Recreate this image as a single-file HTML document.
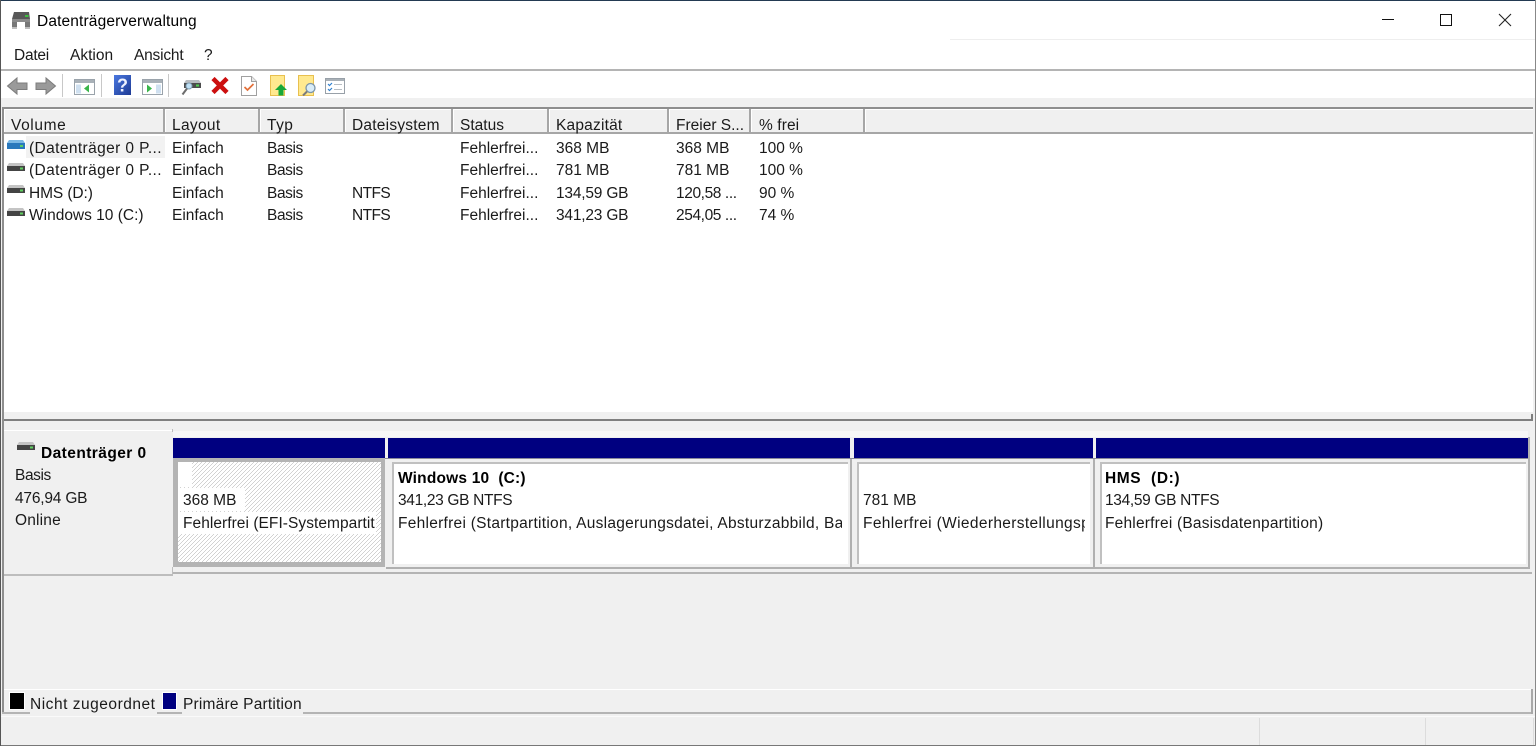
<!DOCTYPE html>
<html lang="de"><head><meta charset="utf-8"><title>Datenträgerverwaltung</title>
<style>
html,body{margin:0;padding:0;width:1536px;height:746px;overflow:hidden;background:#f0f0f0}
body{position:relative;font-family:"Liberation Sans",sans-serif;font-size:15.5px;color:#1a1a1a}
.a{position:absolute}
.t{position:absolute;white-space:pre;line-height:18px;height:20px}
.b{font-weight:bold;color:#000}
.v{position:absolute;top:74px;width:1px;height:23px;background:#c8c8c8}
.h{position:absolute;top:109px;height:23px;background:#f0f0f0;border-right:2px solid #a6a6a6;box-shadow:inset 1px 1px 0 #fff}
.bar{position:absolute;top:438px;height:20px;background:#000080}
.p{position:absolute;top:459px;height:110px;background:#f0f0f0;box-sizing:border-box;border-right:2px solid #b0b0b0;border-bottom:2px solid #b0b0b0}
.pi{position:absolute;top:462px;height:102px;box-sizing:border-box;background:#fff;border-top:2px solid #c0c0c0;border-left:2px solid #c0c0c0}
</style></head><body>
<!-- window -->
<div class="a" style="left:0;top:0;width:1536px;height:69px;background:#fff"></div>
<div class="a" style="left:0;top:0;width:1536px;height:1px;background:#233a52"></div>
<div class="a" style="left:950px;top:39px;width:586px;height:1px;background:#eeeeee"></div>
<div class="a" style="left:0;top:69px;width:1536px;height:2px;background:#b4b4b4"></div>
<div class="a" style="left:0;top:71px;width:1536px;height:27px;background:#fff"></div>

<!-- title -->
<svg class="a" style="left:11px;top:12px" width="20" height="17" viewBox="0 0 20 17">
<path d="M3 0h15l1 7H1z" fill="#585858"/><path d="M1 7h18v3H1z" fill="#8a8a8a"/><path d="M1 10h5v7H1zM14 10h5v7h-5z" fill="#777"/><path d="M6 10h8v6H6z" fill="#fff"/><path d="M14 3h3.500v2H14z" fill="#3fc03f"/><path d="M1 15h5v2H1zM14 15h5v2h-5z" fill="#bdbdbd"/>
</svg>
<div class="t" style="left:37px;top:13px;color:#000;letter-spacing:.14px">Datenträgerverwaltung</div>

<!-- window controls -->
<div class="a" style="left:1382px;top:19px;width:12px;height:1px;background:#111"></div>
<div class="a" style="left:1440px;top:14px;width:12px;height:12px;box-sizing:border-box;border:1px solid #111"></div>
<svg class="a" style="left:1498px;top:13px" width="14" height="14" viewBox="0 0 14 14"><path d="M1 1l12 12M13 1L1 13" stroke="#222" stroke-width="1.1" fill="none"/></svg>

<!-- menu -->
<div class="t" style="left:14px;top:47px;letter-spacing:-.25px">Datei</div>
<div class="t" style="left:70px;top:47px">Aktion</div>
<div class="t" style="left:134px;top:47px;letter-spacing:-.2px">Ansicht</div>
<div class="t" style="left:204px;top:47px">?</div>

<!-- toolbar -->
<svg class="a" style="left:6px;top:76px" width="51" height="20" viewBox="0 0 51 20">
<path d="M1.500 10L11 2v5h10v6.500H11v4.500z" fill="#9a9a9a" stroke="#7c7c7c"/>
<path d="M49.500 10L40 2v5H30v6.500h10v4.500z" fill="#9a9a9a" stroke="#7c7c7c"/>
</svg>
<div class="v" style="left:62px"></div>
<svg class="a" style="left:74px;top:79px" width="21" height="16" viewBox="0 0 21 16">
<rect x=".5" y=".5" width="20" height="15" fill="#fff" stroke="#9aa3ab"/><rect x="1" y="1" width="19" height="3" fill="#a9b1b8"/><rect x="2" y="5.500" width="5" height="9" fill="#cfe0f0"/><path d="M15 5.500v8l-5-4z" fill="#39b54a"/>
</svg>
<div class="v" style="left:101px"></div>
<svg class="a" style="left:114px;top:75px" width="18" height="20" viewBox="0 0 18 20">
<defs><linearGradient id="g" x1="0" y1="0" x2="1" y2="1"><stop offset="0" stop-color="#4a78e0"/><stop offset="1" stop-color="#1d3a94"/></linearGradient></defs>
<rect width="17" height="20" fill="url(#g)"/>
<text x="8.500" y="16.500" font-family="Liberation Sans" font-weight="bold" font-size="18" fill="#eef2ff" text-anchor="middle">?</text>
</svg>
<svg class="a" style="left:142px;top:79px" width="21" height="16" viewBox="0 0 21 16">
<rect x=".5" y=".5" width="20" height="15" fill="#fff" stroke="#9aa3ab"/><rect x="1" y="1" width="19" height="3" fill="#a9b1b8"/><rect x="14" y="5.500" width="5" height="9" fill="#cfe0f0"/><path d="M5 5.500v8l5-4z" fill="#39b54a"/>
</svg>
<div class="v" style="left:168px"></div>
<svg class="a" style="left:181px;top:79px" width="20" height="17" viewBox="0 0 20 17">
<path d="M5 1h13l2 3H3z" fill="#b8bcc0"/><rect x="3" y="4" width="17" height="5" fill="#4c4c4c"/><rect x="15" y="5.500" width="3" height="2" fill="#4fd04f"/><circle cx="8" cy="7" r="3" fill="#bfe0f5" stroke="#7f9fb5"/><path d="M6 9.500L1.500 15.500" stroke="#6d6d6d" stroke-width="2"/>
</svg>
<svg class="a" style="left:211px;top:77px" width="18" height="17" viewBox="0 0 18 17"><path d="M2 1.500l14 14M16 1.500l-14 14" stroke="#cc0f0f" stroke-width="4.500"/></svg>
<svg class="a" style="left:241px;top:76px" width="16" height="20" viewBox="0 0 16 20">
<path d="M.5.500h10l5 5v14H.500z" fill="#fff" stroke="#a0a0a0"/><path d="M10.500.500v5h5" fill="#e8e8e8" stroke="#a0a0a0"/><path d="M3.500 11l3 3 6-6" fill="none" stroke="#e2703a" stroke-width="1.700"/>
</svg>
<svg class="a" style="left:270px;top:75px" width="18" height="21" viewBox="0 0 18 21">
<path d="M.5.500h14v20H.500z" fill="#ffe98f" stroke="#e8c04f"/><path d="M11 9l6 6h-3.500v5.500h-5V15H5z" fill="#18a838"/>
</svg>
<svg class="a" style="left:298px;top:75px" width="19" height="21" viewBox="0 0 19 21">
<path d="M.5.500h15v20H.500z" fill="#ffe98f" stroke="#e8c04f"/><circle cx="12.500" cy="13" r="4.500" fill="#d8ecf8" stroke="#7b94a8" stroke-width="1.300"/><path d="M9 16.500l-4 4" stroke="#7b7b7b" stroke-width="2"/>
</svg>
<svg class="a" style="left:325px;top:78px" width="20" height="16" viewBox="0 0 20 16">
<rect x=".5" y=".5" width="19" height="15" fill="#fff" stroke="#98a0a8"/><rect x="1" y="1" width="18" height="2" fill="#a9b1b8"/><path d="M3 6l1.500 1.500L7 5M3 11l1.500 1.500L7 10" stroke="#2f80d0" fill="none" stroke-width="1.200"/><path d="M9 6.500h8M9 11.500h8" stroke="#b8bec4"/>
</svg>

<!-- list pane -->
<div class="a" style="left:2px;top:107px;width:1531px;height:2px;background:#8e8e8e"></div>
<div class="a" style="left:4px;top:109px;width:1529px;height:303px;background:#fff"></div>

<div class="h" style="left:4px;width:159px"></div>
<div class="h" style="left:165px;width:93px"></div>
<div class="h" style="left:260px;width:83px"></div>
<div class="h" style="left:345px;width:106px"></div>
<div class="h" style="left:453px;width:94px"></div>
<div class="h" style="left:549px;width:118px"></div>
<div class="h" style="left:669px;width:80px"></div>
<div class="h" style="left:751px;width:112px"></div>
<div class="h" style="left:865px;width:668px;border-right:0"></div>
<div class="a" style="left:4px;top:132px;width:1529px;height:2px;background:#a6a6a6"></div>

<div class="t" style="left:11px;top:117px;letter-spacing:.6px">Volume</div>
<div class="t" style="left:172px;top:117px;letter-spacing:.33px">Layout</div>
<div class="t" style="left:267px;top:117px;letter-spacing:.45px">Typ</div>
<div class="t" style="left:352px;top:117px;letter-spacing:.23px">Dateisystem</div>
<div class="t" style="left:460px;top:117px">Status</div>
<div class="t" style="left:556px;top:117px;letter-spacing:.2px">Kapazität</div>
<div class="t" style="left:676px;top:117px">Freier S...</div>
<div class="t" style="left:759px;top:117px;letter-spacing:.1px">% frei</div>

<div class="a" style="left:26px;top:136px;width:139px;height:22px;background:#f2f2f2"></div>

<!-- drive icons -->
<svg class="a" style="left:7px;top:139px" width="18" height="12" viewBox="0 0 18 12"><path d="M2 1h14l2 3H0z" fill="#7cb8e4"/><rect y="4" width="18" height="6" fill="#2a78bc"/><rect x="13" y="6" width="3" height="2" fill="#5fd05f"/></svg>
<svg class="a" style="left:7px;top:162px" width="18" height="12" viewBox="0 0 18 12"><path d="M2 1h14l2 3H0z" fill="#c4c4c4"/><rect y="4" width="18" height="5" fill="#444"/><rect x="13" y="5.500" width="3" height="2" fill="#5fd05f"/></svg>
<svg class="a" style="left:7px;top:184px" width="18" height="12" viewBox="0 0 18 12"><path d="M2 1h14l2 3H0z" fill="#c4c4c4"/><rect y="4" width="18" height="5" fill="#444"/><rect x="13" y="5.500" width="3" height="2" fill="#5fd05f"/></svg>
<svg class="a" style="left:7px;top:207px" width="18" height="12" viewBox="0 0 18 12"><path d="M2 1h14l2 3H0z" fill="#c4c4c4"/><rect y="4" width="18" height="5" fill="#444"/><rect x="13" y="5.500" width="3" height="2" fill="#5fd05f"/></svg>

<!-- rows -->
<div class="t" style="left:29px;top:140px;letter-spacing:.39px">(Datenträger 0 P...</div>
<div class="t" style="left:172px;top:140px">Einfach</div>
<div class="t" style="left:267px;top:140px;letter-spacing:-.4px">Basis</div>
<div class="t" style="left:460px;top:140px">Fehlerfrei...</div>
<div class="t" style="left:556px;top:140px">368 MB</div>
<div class="t" style="left:676px;top:140px">368 MB</div>
<div class="t" style="left:759px;top:140px">100 %</div>

<div class="t" style="left:29px;top:162px;letter-spacing:.39px">(Datenträger 0 P...</div>
<div class="t" style="left:172px;top:162px">Einfach</div>
<div class="t" style="left:267px;top:162px;letter-spacing:-.4px">Basis</div>
<div class="t" style="left:460px;top:162px">Fehlerfrei...</div>
<div class="t" style="left:556px;top:162px">781 MB</div>
<div class="t" style="left:676px;top:162px">781 MB</div>
<div class="t" style="left:759px;top:162px">100 %</div>

<div class="t" style="left:29px;top:185px;letter-spacing:-.1px">HMS (D:)</div>
<div class="t" style="left:172px;top:185px">Einfach</div>
<div class="t" style="left:267px;top:185px;letter-spacing:-.4px">Basis</div>
<div class="t" style="left:352px;top:185px;letter-spacing:-.6px">NTFS</div>
<div class="t" style="left:460px;top:185px">Fehlerfrei...</div>
<div class="t" style="left:556px;top:185px;letter-spacing:-.2px">134,59 GB</div>
<div class="t" style="left:676px;top:185px;letter-spacing:-.4px">120,58 ...</div>
<div class="t" style="left:759px;top:185px">90 %</div>

<div class="t" style="left:29px;top:207px">Windows 10 (C:)</div>
<div class="t" style="left:172px;top:207px">Einfach</div>
<div class="t" style="left:267px;top:207px;letter-spacing:-.4px">Basis</div>
<div class="t" style="left:352px;top:207px;letter-spacing:-.6px">NTFS</div>
<div class="t" style="left:460px;top:207px">Fehlerfrei...</div>
<div class="t" style="left:556px;top:207px;letter-spacing:-.2px">341,23 GB</div>
<div class="t" style="left:676px;top:207px;letter-spacing:-.4px">254,05 ...</div>
<div class="t" style="left:759px;top:207px">74 %</div>

<!-- splitter -->
<div class="a" style="left:4px;top:412px;width:1529px;height:7px;background:#f0f0f0"></div>
<div class="a" style="left:4px;top:419px;width:1529px;height:2px;background:#7f7f7f"></div>
<div class="a" style="left:1531px;top:414px;width:2px;height:7px;background:#7f7f7f"></div>
<div class="a" style="left:2px;top:107px;width:2px;height:607px;background:#8e8e8e"></div>

<!-- disk panel -->
<div class="a" style="left:4px;top:430px;width:169px;height:1px;background:#fff"></div>
<div class="a" style="left:173px;top:431px;width:1355px;height:6px;background:#f7f7f7"></div>
<div class="a" style="left:4px;top:574px;width:169px;height:2px;background:#bdbdbd"></div>
<div class="a" style="left:172px;top:567px;width:1px;height:8px;background:#bdbdbd"></div>
<div class="a" style="left:172px;top:429px;width:1px;height:3px;background:#bdbdbd"></div>
<svg class="a" style="left:17px;top:441px" width="18" height="12" viewBox="0 0 18 12"><path d="M2 1h14l2 3H0z" fill="#c4c4c4"/><rect y="4" width="18" height="5" fill="#444"/><rect x="13" y="5.500" width="3" height="2" fill="#5fd05f"/></svg>
<div class="t b" style="left:41px;top:445px;letter-spacing:.43px">Datenträger 0</div>
<div class="t" style="left:15px;top:467px;letter-spacing:-.4px">Basis</div>
<div class="t" style="left:15px;top:490px;letter-spacing:-.2px">476,94 GB</div>
<div class="t" style="left:15px;top:512px;letter-spacing:.18px">Online</div>

<!-- bars -->
<div class="bar" style="left:173px;width:212px"></div>
<div class="bar" style="left:388px;width:462px"></div>
<div class="bar" style="left:854px;width:239px"></div>
<div class="bar" style="left:1096px;width:432px"></div>
<div class="a" style="left:173px;top:458px;width:1355px;height:1px;background:#8a8a9a"></div>
<div class="a" style="left:1528px;top:437px;width:2px;height:22px;background:#b0b0b0"></div>

<!-- partitions -->
<div class="a" style="left:173px;top:458px;width:212px;height:109px;background:#b4b4b4"></div>
<svg class="a" style="left:178px;top:462px" width="203" height="100" shape-rendering="crispEdges">
<defs><pattern id="h" width="4" height="4" patternUnits="userSpaceOnUse"><rect width="4" height="4" fill="#fff"/><rect x="3" y="0" width="1" height="1" fill="#d2d2d2"/><rect x="2" y="1" width="1" height="1" fill="#d2d2d2"/><rect x="1" y="2" width="1" height="1" fill="#d2d2d2"/><rect x="0" y="3" width="1" height="1" fill="#d2d2d2"/></pattern></defs>
<rect width="203" height="100" fill="url(#h)"/></svg>
<div class="a" style="left:178px;top:462px;width:14px;height:25px;background:#fff"></div>
<div class="a" style="left:178px;top:488px;width:67px;height:23px;background:#fff"></div>
<div class="a" style="left:178px;top:512px;width:198px;height:22px;background:#fff"></div>
<div class="t" style="left:183px;top:492px">368 MB</div>
<div class="t" style="left:183px;top:515px;width:193px;overflow:hidden;letter-spacing:.05px">Fehlerfrei (EFI-Systempartit</div>

<div class="p" style="left:386px;width:466px"></div>
<div class="pi" style="left:392px;width:456px"></div>
<div class="t b" style="left:398px;top:470px;letter-spacing:.19px">Windows 10  (C:)</div>
<div class="t" style="left:398px;top:492px;letter-spacing:-.33px">341,23 GB NTFS</div>
<div class="t" style="left:398px;top:515px;width:444px;overflow:hidden;letter-spacing:.27px">Fehlerfrei (Startpartition, Auslagerungsdatei, Absturzabbild, Ba</div>

<div class="p" style="left:852px;width:243px"></div>
<div class="pi" style="left:857px;width:233px"></div>
<div class="t" style="left:863px;top:492px">781 MB</div>
<div class="t" style="left:863px;top:515px;width:222px;overflow:hidden;letter-spacing:.35px">Fehlerfrei (Wiederherstellungsp</div>

<div class="p" style="left:1095px;width:435px"></div>
<div class="pi" style="left:1100px;width:426px"></div>
<div class="t b" style="left:1105px;top:470px;letter-spacing:.6px">HMS  (D:)</div>
<div class="t" style="left:1105px;top:492px;letter-spacing:-.33px">134,59 GB NTFS</div>
<div class="t" style="left:1105px;top:515px;letter-spacing:.2px">Fehlerfrei (Basisdatenpartition)</div>

<div class="a" style="left:173px;top:572px;width:1359px;height:2px;background:#b4b4b4"></div>

<!-- legend -->
<div class="a" style="left:4px;top:689px;width:1528px;height:1px;background:#fff"></div>
<div class="a" style="left:2px;top:712px;width:1531px;height:2px;background:#b4b4b4"></div>
<div class="a" style="left:30px;top:712px;width:127px;height:2px;background:#f0f0f0"></div>
<div class="a" style="left:182px;top:712px;width:121px;height:2px;background:#f0f0f0"></div>
<div class="a" style="left:1531px;top:689px;width:2px;height:25px;background:#a8a8a8"></div>
<div class="a" style="left:9px;top:692px;width:14px;height:16px;background:#000;border:1px solid #fff"></div>
<div class="t" style="left:30px;top:696px;letter-spacing:.52px">Nicht zugeordnet</div>
<div class="a" style="left:162px;top:692px;width:13px;height:16px;background:#000080;border:1px solid #fff"></div>
<div class="t" style="left:183px;top:696px;letter-spacing:.2px">Primäre Partition</div>

<!-- status bar -->
<div class="a" style="left:0;top:716px;width:1536px;height:1px;background:#fafafa"></div>
<div class="a" style="left:1259px;top:718px;width:1px;height:27px;background:#dcdcdc"></div>
<div class="a" style="left:1425px;top:718px;width:1px;height:27px;background:#dcdcdc"></div>
<div class="a" style="left:1533px;top:718px;width:1px;height:27px;background:#dcdcdc"></div>
<div class="a" style="left:0;top:745px;width:1536px;height:1px;background:#777"></div>
<div class="a" style="left:0;top:0;width:1px;height:746px;background:#555"></div>
<div class="a" style="left:1535px;top:0;width:1px;height:746px;background:#888"></div>
</body></html>
